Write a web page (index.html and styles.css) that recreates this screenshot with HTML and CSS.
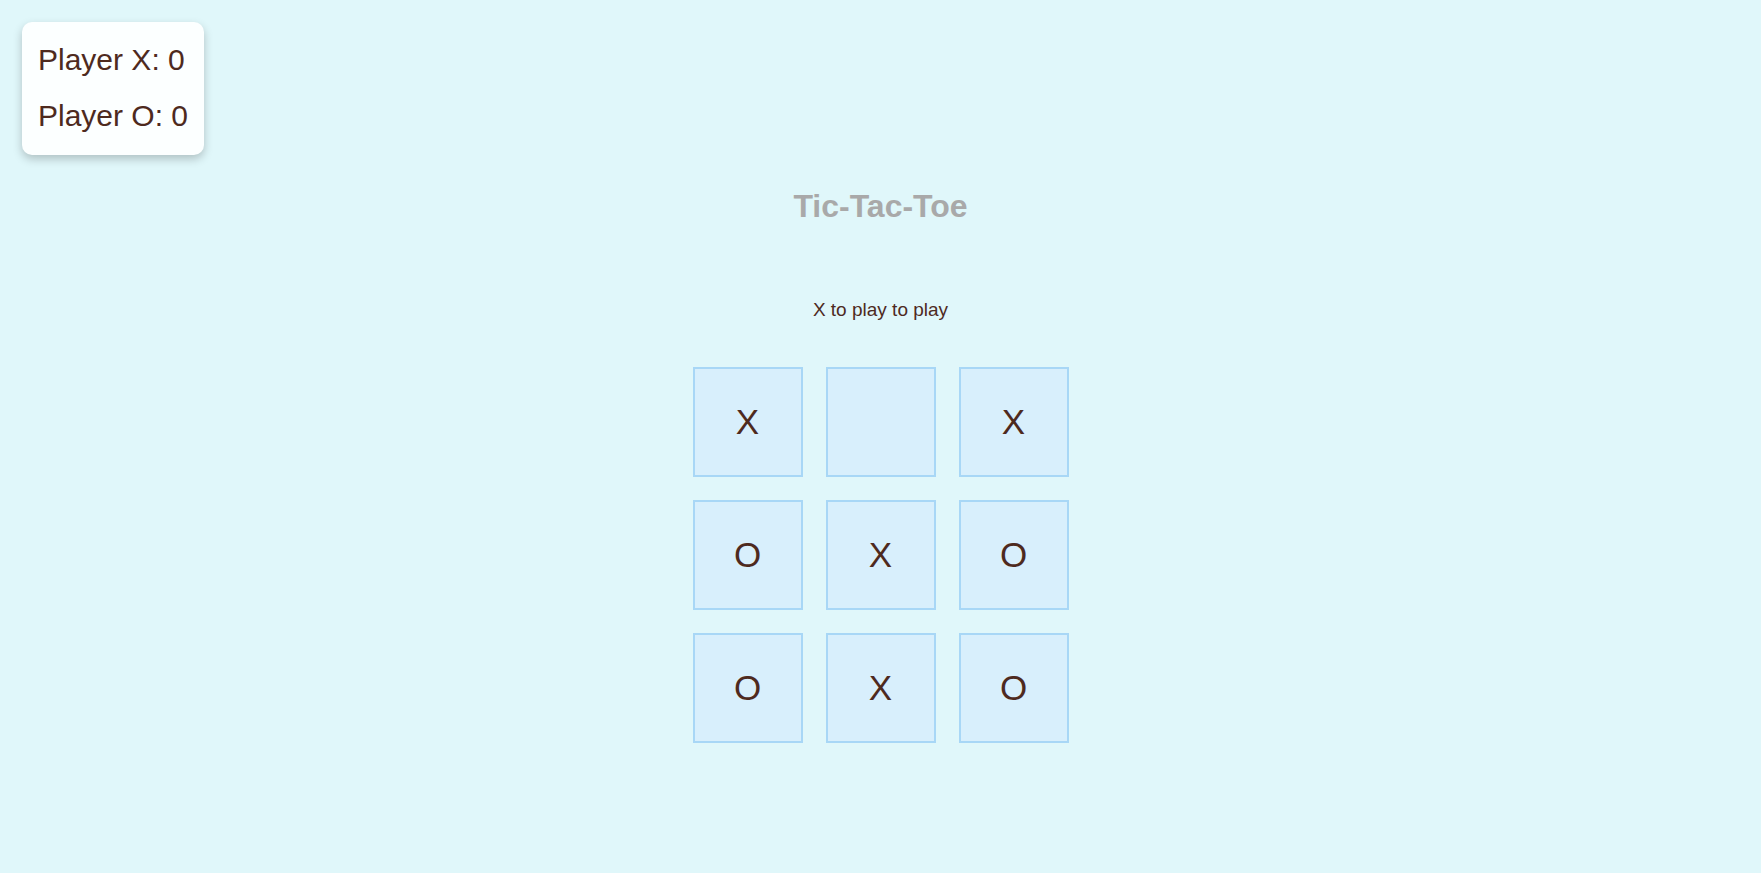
FILE: index.html
```html
<!DOCTYPE html>
<html lang="en">
<head>
<meta charset="utf-8">
<title>Tic-Tac-Toe</title>
<link rel="stylesheet" href="styles.css">
</head>
<body>
<div class="scoreboard">
  <div class="score">Player X: 0</div>
  <div class="score">Player O: 0</div>
</div>
<main class="game">
  <h1 class="title">Tic-Tac-Toe</h1>
  <div class="status">X to play to play</div>
  <div class="board">
    <div class="cell">X</div>
    <div class="cell"></div>
    <div class="cell">X</div>
    <div class="cell">O</div>
    <div class="cell">X</div>
    <div class="cell">O</div>
    <div class="cell">O</div>
    <div class="cell">X</div>
    <div class="cell">O</div>
  </div>
</main>
</body>
</html>
```
FILE: styles.css
```css
html, body {
  margin: 0;
  padding: 0;
}
body {
  background: #e0f7fa;
  font-family: "Liberation Sans", Arial, sans-serif;
  color: #4e2a1e;
  min-height: 873px;
}
.scoreboard {
  position: absolute;
  top: 22px;
  left: 22px;
  background: #fcffff;
  border-radius: 10px;
  box-shadow: 0 4px 10px rgba(0, 0, 0, 0.22);
  padding: 10px 16px 11px;
}
.score {
  font-size: 30px;
  line-height: 56px;
  white-space: nowrap;
}
.game {
  display: flex;
  flex-direction: column;
  align-items: center;
  padding-top: 186px;
}
.title {
  margin: 0;
  font-size: 32px;
  line-height: 40px;
  font-weight: bold;
  color: #a9a9a9;
}
.status {
  margin-top: 72px;
  font-size: 19px;
  line-height: 24px;
}
.board {
  margin-top: 45px;
  display: grid;
  grid-template-columns: repeat(3, 110px);
  grid-auto-rows: 110px;
  gap: 23px;
}
.cell {
  box-sizing: border-box;
  border: 2px solid #a8d7f6;
  background: #d8effc;
  display: flex;
  align-items: center;
  justify-content: center;
  font-size: 35px;
}
```
